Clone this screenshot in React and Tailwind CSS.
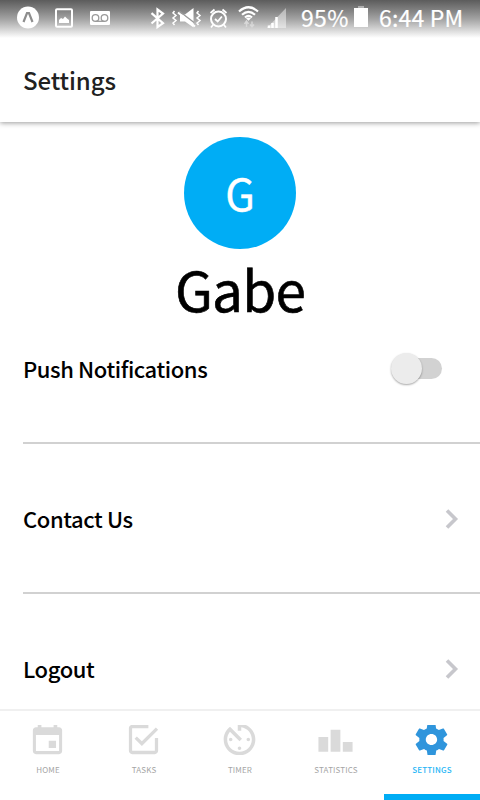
import React from "react";
import { IoMdCalendar, IoMdCheckboxOutline, IoMdTimer, IoMdPodium, IoMdSettings } from "react-icons/io";

const tabs = [
  { label: "HOME", Icon: IoMdCalendar },
  { label: "TASKS", Icon: IoMdCheckboxOutline },
  { label: "TIMER", Icon: IoMdTimer },
  { label: "STATISTICS", Icon: IoMdPodium },
  { label: "SETTINGS", Icon: IoMdSettings, active: true },
];

function StatusIcons() {
  return (
    <svg width="301" height="38" viewBox="0 0 301 38" className="shrink-0" fill="none" stroke="#fff">
      <circle cx="28" cy="17.5" r="11" fill="#fff" stroke="none" />
      <path d="M23.5 22 27 13.2h2L32.5 22" stroke="#8e8e8e" strokeWidth="2.2" />
      <rect x="56" y="9.2" width="16" height="17.5" rx="1" strokeWidth="2" />
      <path d="M59 23v-3l2-2 2 1 2-2.500 2 2 2 1.500v3z" fill="#fff" stroke="none" />
      <rect x="90" y="11" width="20" height="14" rx="1" fill="#fff" stroke="none" />
      <g stroke="#9a9a9a" strokeWidth="1.3">
        <circle cx="95.500" cy="18" r="3.300" />
        <circle cx="104.500" cy="18" r="3.300" />
        <path d="M95.500 21.300h9" />
      </g>
      <path d="m151.500 13.200 11.500 10-5.500 4V9.500l5.500 4-11.500 10" strokeWidth="2.200" />
      <path d="m174.500 11-1.500 2 3 2.500-3 2.500 3 2.500-3 2.500 1.500 2M198.500 11l-1.500 2 3 2.500-3 2.500 3 2.500-3 2.500 1.500 2" strokeWidth="1.500" />
      <path d="M180 14.500h5l8.500-6.500v19.500l-8.500-6h-5z" fill="#fff" stroke="none" />
      <path d="m179 11 15 11.500" stroke="#999" strokeWidth="1.300" />
      <path d="m178 12.500 17 14" strokeWidth="2" />
      <circle cx="218.500" cy="19" r="7.500" strokeWidth="2" />
      <path d="m215 19 2.700 2.500 4.200-5M210.500 13l4-3.500M226.500 13l-4-3.500M213 25l-2 2.500M224 25l2 2.500" strokeWidth="1.800" />
      <path d="M239 11.500q9.500-8.500 19 0M242 14.800q6.500-6 13 0M245 17.500q3.500-3.300 7 0" strokeWidth="2.200" />
      <path d="m246 18.300 2.500 2.500 2.500-2.500q-2.500-1.500-5 0z" fill="#fff" stroke="none" />
      <path d="M246.500 27v-5M252 21.500v5M244.500 24l2-3 2 3M250 24.500l2 2.500 2-2.500" stroke="#d8d8d8" strokeWidth="1.400" />
      <path d="M286 8v20h-19z" fill="#fff" fillOpacity=".45" stroke="none" />
      <path d="M269 28v-2.500M272.500 28v-5M276.500 28v-11" strokeWidth="2.500" />
    </svg>
  );
}

function Row({ label, children }) {
  return (
    <div className="flex h-[150px] items-center justify-between pr-[21px]">
      <span className="mb-[2px] text-[22px] font-medium leading-none tracking-[-0.4px] text-black">{label}</span>
      {children}
    </div>
  );
}

function Chevron() {
  return (
    <svg width="14" height="22" viewBox="0 0 14 22" fill="none" stroke="#c7c7cc" strokeWidth="3.600">
      <path d="m2 2.500 8.500 8.500-8.500 8.500" />
    </svg>
  );
}

export default function App() {
  return (
    <div className="flex h-[800px] w-[480px] flex-col overflow-hidden bg-white font-['Noto_Sans_CJK_SC',sans-serif]">
      <header className="relative z-10 flex h-[122px] shrink-0 flex-col bg-white shadow-[0_1px_5px_rgba(0,0,0,0.4)]">
        <div className="flex h-[38px] bg-linear-to-b from-[#5c5c5c] via-[#a3a3a3] via-50% to-white text-[23px] leading-[35px] text-white [-webkit-text-stroke:0.2px_white]">
          <StatusIcons />
          <span className="w-[53px] tracking-[0.3px]">95%</span>
          <span className="flex w-[14px] flex-col items-center pt-[6px]">
            <span className="h-[2px] w-[6px] bg-[#b0b0b0]" />
            <span className="h-[19px] w-[14px] bg-white" />
          </span>
          <span className="ml-[11px] whitespace-nowrap tracking-[0.2px]">6:44 PM</span>
        </div>
        <h1 className="pl-[23px] text-2xl font-medium leading-[84px] tracking-[-0.1px] text-[#212121]">Settings</h1>
      </header>
      <main className="flex min-h-0 flex-1 flex-col overflow-hidden">
        <div className="mt-[15px] flex h-28 w-28 shrink-0 items-center justify-center self-center rounded-full bg-[#00adf5] text-[43px] leading-none text-white [-webkit-text-stroke:0.4px_white]">
          <span className="mb-px">G</span>
        </div>
        <div className="mt-[9px] shrink-0 text-center text-[55px] leading-[60px] tracking-[-0.8px] text-black [-webkit-text-stroke:0.6px_black]">Gabe</div>
        <div className="-mt-[24px] shrink-0 pl-[23px]">
          <Row label="Push Notifications">
            <div className="mb-[2px] mr-[17px] flex h-[21px] w-[46px] items-center rounded-full bg-[#d2d2d2]">
              <span className="-ml-[5px] h-[31px] w-[31px] shrink-0 rounded-full bg-[#ececec] shadow-[0_1px_2px_rgba(0,0,0,0.35)]" />
            </div>
          </Row>
          <div className="-mt-[2px] h-[2px] bg-[#d1d1d1]" />
          <Row label="Contact Us"><Chevron /></Row>
          <div className="-mt-[2px] h-[2px] bg-[#d1d1d1]" />
          <Row label="Logout"><Chevron /></Row>
        </div>
      </main>
      <nav className="flex h-[91px] shrink-0 border-t-2 border-[#f0f0f0] bg-white">
        {tabs.map(({ label, Icon, active }) => (
          <div key={label} className={active ? "flex flex-1 flex-col items-center border-b-[6px] border-[#00adf5] pt-[14px] text-[#2f95dc]" : "flex flex-1 flex-col items-center pt-[14px] text-[#dadada]"}>
            <span className="flex h-[30px] w-10 shrink-0 overflow-hidden">
              <Icon size={39} className="-mt-[5px] shrink-0" />
            </span>
            <span className={active ? "mt-[9px] text-[8px] font-medium leading-3 tracking-[0.15px] text-[#1fb6f6]" : "mt-[9px] text-[8px] leading-3 tracking-[0.15px] text-[#a5a5a5]"}>{label}</span>
          </div>
        ))}
      </nav>
    </div>
  );
}
